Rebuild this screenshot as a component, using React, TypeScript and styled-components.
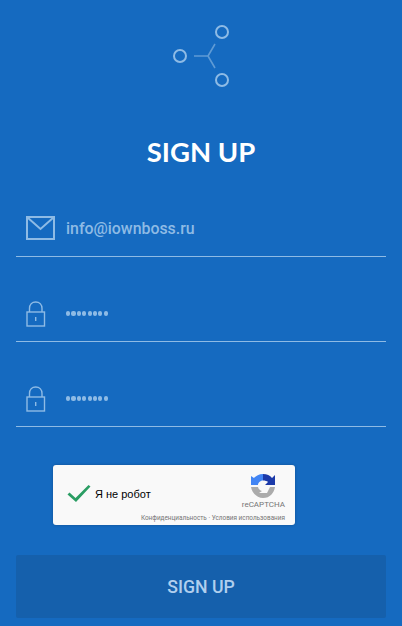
import React from 'react';
import styled, { createGlobalStyle } from 'styled-components';

const GlobalStyle = createGlobalStyle`
  html, body {
    margin: 0;
    padding: 0;
    background: #156ac0;
  }
`;

const Page = styled.div`
  width: 402px;
  height: 626px;
  box-sizing: border-box;
  padding: 22px 16px 0;
  background: #156ac0;
  overflow: hidden;
  font-family: Roboto, sans-serif;
`;
const Logo = styled.div`
  display: flex;
  justify-content: center;
  height: 68px;
  padding-right: 2px;
  svg {
    display: block;
  }
`;
const Title = styled.h1`
  margin: 45px 0 0;
  height: 34px;
  font-family: Lato, sans-serif;
  font-size: 27.5px;
  line-height: 34px;
  font-weight: 700;
  color: #fff;
  text-align: center;
`;
const Form = styled.form`
  margin-top: 38px;
  display: flex;
  flex-direction: column;
`;
const Field = styled.div`
  display: flex;
  align-items: center;
  height: 85px;
  box-sizing: border-box;
  padding: 0 0 0 10px;
  border-bottom: 1px solid #8ebbe5;
  &:first-child {
    height: 50px;
    padding-bottom: 7px;
  }
  &:not(:first-child) {
    padding-top: 30px;
    padding-bottom: 0;
  }
`;
const IconSlot = styled.div`
  width: 40px;
  display: flex;
  align-items: center;
`;
const Email = styled.span`
  font-size: 15.9px;
  font-weight: 500;
  color: #8ebbe5;
`;
const Dots = styled.span`
  display: flex;
  gap: 1.2px;
  margin-top: -1px;
`;
const Dot = styled.i`
  display: block;
  width: 4.2px;
  height: 4.2px;
  border-radius: 50%;
  background: #8ebbe5;
`;
const Captcha = styled.div`
  position: relative;
  width: 242px;
  height: 60px;
  margin: 38px 0 0 37px;
  box-sizing: border-box;
  padding: 0 10px 0 14px;
  display: flex;
  align-items: flex-start;
  justify-content: space-between;
  background: #f9f9f9;
  border-radius: 3px;
  box-shadow: 0 0 3px rgba(0, 0, 0, 0.25);
`;
const CaptchaLabel = styled.div`
  display: flex;
  align-items: center;
  gap: 4px;
  height: 57px;
  font-family: 'Liberation Sans', sans-serif;
  font-size: 11px;
  color: #000;
`;
const Badge = styled.div`
  display: flex;
  flex-direction: column;
  align-items: center;
  padding-top: 8px;
`;
const BadgeName = styled.span`
  margin-top: 1px;
  font-size: 8px;
  line-height: 10px;
  color: #757575;
`;
const Terms = styled.div`
  position: absolute;
  right: 10px;
  bottom: 3px;
  font-size: 6.4px;
  line-height: 8px;
  white-space: nowrap;
  color: #757575;
`;
const Submit = styled.button`
  display: block;
  width: 100%;
  height: 63px;
  margin-top: 30px;
  border: 0;
  border-radius: 2px;
  background: #1560ac;
  font-family: Roboto, sans-serif;
  font-size: 17.7px;
  font-weight: 500;
  color: #b0cfee;
`;

const MailIcon = () => (
  <svg width="30" height="25" viewBox="0 0 30 25" fill="none" stroke="#8ebbe5" strokeWidth="2">
    <rect x="1" y="1" width="27" height="22" />
    <path d="M1.5 1.5 L14.5 13 L27.5 1.5" />
  </svg>
);

const LockIcon = () => (
  <svg width="20" height="26" viewBox="0 0 20 26" fill="none" stroke="#8ebbe5" strokeWidth="1.4">
    <rect x="1" y="11" width="17.5" height="14" />
    <path d="M3.5 11 V7.5 C3.5 3.5 6 1 9.7 1 C13.4 1 16 3.5 16 7.5 V11" />
    <path d="M9.7 16 V20" />
  </svg>
);

const Password = () => (
  <Field>
    <IconSlot>
      <LockIcon />
    </IconSlot>
    <Dots>
      {Array.from({ length: 8 }).map((_, i) => (
        <Dot key={i} />
      ))}
    </Dots>
  </Field>
);

const App: React.FC = () => (
  <Page>
    <GlobalStyle />
    <Logo>
      <svg width="60" height="68" viewBox="0 0 60 68" fill="none">
        <g stroke="#8ebbe5" strokeWidth="2">
          <circle cx="52" cy="10" r="6" />
          <circle cx="10" cy="34" r="6" />
          <circle cx="52" cy="58" r="6" />
        </g>
        <path d="M24 34 H38 M38 34 L45 22 M38 34 L45 46" stroke="#5f9bd5" strokeWidth="1.6" />
      </svg>
    </Logo>
    <Title>SIGN UP</Title>
    <Form>
      <Field>
        <IconSlot>
          <MailIcon />
        </IconSlot>
        <Email>info@iownboss.ru</Email>
      </Field>
      <Password />
      <Password />
      <Captcha>
        <CaptchaLabel>
          <svg width="24" height="20" viewBox="0 0 24 20">
            <path d="M0.5 10.5 L2.5 8.5 L8.5 14 L21.5 1 L23.5 2.5 L9 18 Z" fill="#2a9d63" />
          </svg>
          <span>Я не робот</span>
        </CaptchaLabel>
        <Badge>
          <svg width="26" height="26" viewBox="0 0 26 26">
            <path d="M13 1 C17 1 20 2.5 22 5 L25 2 V12 H15 L18 9 C17 8 15 7.5 13 7.5 Z" fill="#1c3aa9" />
            <path d="M13 1 C9 1 6 3 4 5 L1 3 V12 H8 C8 10 10 7.5 13 7.5 Z" fill="#4285f4" />
            <path d="M1 14 H8 C8.5 16 10 17.5 12 18 L9 20 H17 L20 14 H25 C24 20 20 25 13 25 C7 25 2 20 1 14 Z" fill="#ababab" />
          </svg>
          <BadgeName>reCAPTCHA</BadgeName>
        </Badge>
        <Terms>Конфиденциальность · Условия использования</Terms>
      </Captcha>
      <Submit type="button">SIGN UP</Submit>
    </Form>
  </Page>
);

export default App;
